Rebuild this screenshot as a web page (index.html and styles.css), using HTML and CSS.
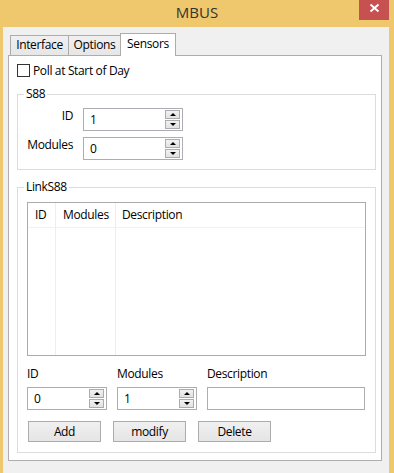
FILE: index.html
```html
<!DOCTYPE html>
<html lang="en">
<head>
    <meta charset="UTF-8">
    <title>MBUS</title>
    <link rel="stylesheet" href="styles.css">
</head>
<body>
    <div class="window">
        <div class="titlebar">
            <span class="title">MBUS</span>
            <div class="close">
                <svg width="30" height="20" viewBox="0 0 30 20"><path d="M11.5 4.5 L19.5 11.5 M19.5 4.5 L11.5 11.5" stroke="#fff" stroke-width="2" fill="none"/></svg>
            </div>
        </div>

        <div class="client">
            <div class="tabs">
                <div class="tab t-interface">Interface</div>
                <div class="tab t-options">Options</div>
                <div class="tab t-sensors active">Sensors</div>
            </div>

            <div class="panel">
                <div class="check">
                    <span class="box"></span>
                    <span>Poll at Start of Day</span>
                </div>

                <fieldset class="group">
                    <legend>S88</legend>
                    <div class="s88-grid">
                        <span class="lbl">ID</span>
                        <div class="spin">
                            <span class="val">1</span>
                            <span class="arrows"><span class="arr"><i class="up"></i></span><span class="arr"><i class="down"></i></span></span>
                        </div>
                        <span class="lbl">Modules</span>
                        <div class="spin">
                            <span class="val">0</span>
                            <span class="arrows"><span class="arr"><i class="up"></i></span><span class="arr"><i class="down"></i></span></span>
                        </div>
                    </div>
                </fieldset>

                <fieldset class="group">
                    <legend>LinkS88</legend>
                    <div class="link-body">
                        <div class="list">
                            <div class="list-row list-head">
                                <span class="col c1">ID</span>
                                <span class="col c2">Modules</span>
                                <span class="col c3">Description</span>
                            </div>
                            <div class="list-row list-body">
                                <span class="col c1"></span>
                                <span class="col c2"></span>
                                <span class="col c3"></span>
                            </div>
                        </div>

                        <div class="edit-grid">
                            <span>ID</span>
                            <span>Modules</span>
                            <span>Description</span>
                            <div class="spin">
                                <span class="val">0</span>
                                <span class="arrows"><span class="arr"><i class="up"></i></span><span class="arr"><i class="down"></i></span></span>
                            </div>
                            <div class="spin">
                                <span class="val">1</span>
                                <span class="arrows"><span class="arr"><i class="up"></i></span><span class="arr"><i class="down"></i></span></span>
                            </div>
                            <div class="textbox"></div>
                        </div>

                        <div class="buttons">
                            <div class="btn">Add</div>
                            <div class="btn">modify</div>
                            <div class="btn">Delete</div>
                        </div>
                    </div>
                </fieldset>
            </div>
        </div>
    </div>
</body>
</html>
```

FILE: styles.css
```css
body {
    margin: 0;
    background-color: #efc76d;
    font-family: "Open Sans", "Noto Sans", sans-serif;
    font-size: 12px;
    letter-spacing: -0.35px;
    color: #000;
}

.window {
    width: 394px;
    height: 473px;
    overflow: hidden;
}

.titlebar {
    height: 27px;
    display: grid;
    grid-template-columns: 1fr auto 1fr;
    align-items: start;
}

.title {
    grid-column: 2;
    line-height: 25px;
    font-size: 15px;
    letter-spacing: 0;
    color: #333;
}

.close {
    grid-column: 3;
    justify-self: end;
    width: 30px;
    height: 20px;
    margin-right: 5px;
    background: #c75050;
}

.close svg {
    display: block;
}

.client {
    margin: 0 5px 0 3px;
    height: 446px;
    background: #f0f0f0;
    padding-top: 6px;
    box-sizing: border-box;
}

.tabs {
    display: flex;
    align-items: flex-end;
    margin-left: 7px;
}

.tab {
    height: 20px;
    box-sizing: border-box;
    border: 1px solid #acacac;
    border-bottom: none;
    background: linear-gradient(#f0f0f0, #e6e6e6);
    text-align: center;
    line-height: 18px;
    margin-left: -1px;
}

.t-interface {
    width: 59px;
    margin-left: 0;
}

.t-options {
    width: 53px;
}

.t-sensors {
    width: 56px;
}

.tab.active {
    height: 23px;
    background: #fff;
    margin-bottom: -1px;
    position: relative;
    z-index: 1;
    line-height: 19px;
}

.panel {
    margin: 0 7px 0 5px;
    height: 406px;
    box-sizing: border-box;
    border: 1px solid #adadad;
    background: #fff;
    padding: 7px 5px 0 8px;
}

.check {
    display: flex;
    align-items: center;
    height: 14px;
    gap: 3px;
}

.box {
    width: 13px;
    height: 13px;
    box-sizing: border-box;
    border: 1px solid #333;
    background: #fff;
}

.group {
    margin: 10px 0 0;
    padding: 0;
    min-width: 0;
    border: 1px solid #dcdcdc;
}

.group legend {
    margin-left: 6px;
    padding: 0 2px;
    line-height: 14px;
}

.s88-grid {
    display: grid;
    grid-template-columns: 46px 100px;
    column-gap: 10px;
    row-gap: 6px;
    padding: 7px 0 9px 9px;
}

.lbl {
    text-align: right;
    line-height: 16px;
}

.spin {
    height: 23px;
    box-sizing: border-box;
    border: 1px solid #abadb3;
    background: #fff;
    display: flex;
    align-items: center;
}

.spin .val {
    flex: 1;
    padding-left: 6px;
}

.arrows {
    align-self: stretch;
    display: flex;
    flex-direction: column;
    gap: 1px;
    padding: 1px 2px 1px 0;
}

.arr {
    flex: 1;
    width: 15px;
    box-sizing: border-box;
    border: 1px solid #acacac;
    background: linear-gradient(#f2f2f2, #e2e2e2);
    display: flex;
    align-items: center;
    justify-content: center;
}

.arr i {
    width: 0;
    height: 0;
    border-left: 3px solid transparent;
    border-right: 3px solid transparent;
}

.arr .up {
    border-bottom: 3px solid #000;
}

.arr .down {
    border-top: 3px solid #000;
}

.link-body {
    padding: 8px 9px 10px 9px;
}

.list {
    height: 154px;
    box-sizing: border-box;
    border: 1px solid #ababab;
    display: flex;
    flex-direction: column;
}

.list-row {
    display: flex;
}

.list-head {
    height: 25px;
    box-sizing: border-box;
    border-bottom: 1px solid #eef1f5;
}

.list-body {
    flex: 1;
}

.col {
    box-sizing: border-box;
    border-right: 1px solid #eaeef3;
    padding-left: 7px;
    line-height: 24px;
}

.c1 {
    width: 28px;
}

.c2 {
    width: 60px;
}

.c3 {
    flex: 1;
    border-right: none;
    padding-left: 6px;
}

.edit-grid {
    display: grid;
    grid-template-columns: 80px 80px 158px;
    column-gap: 10px;
    row-gap: 5px;
    margin-top: 10px;
    line-height: 16px;
}

.textbox {
    height: 23px;
    box-sizing: border-box;
    border: 1px solid #abadb3;
    background: #fff;
}

.buttons {
    display: flex;
    gap: 12px;
    margin: 11px 0 0 1px;
}

.btn {
    width: 73px;
    height: 21px;
    box-sizing: border-box;
    border: 1px solid #acacac;
    background: linear-gradient(#f0f0f0, #e5e5e5);
    text-align: center;
    line-height: 19px;
}
```
